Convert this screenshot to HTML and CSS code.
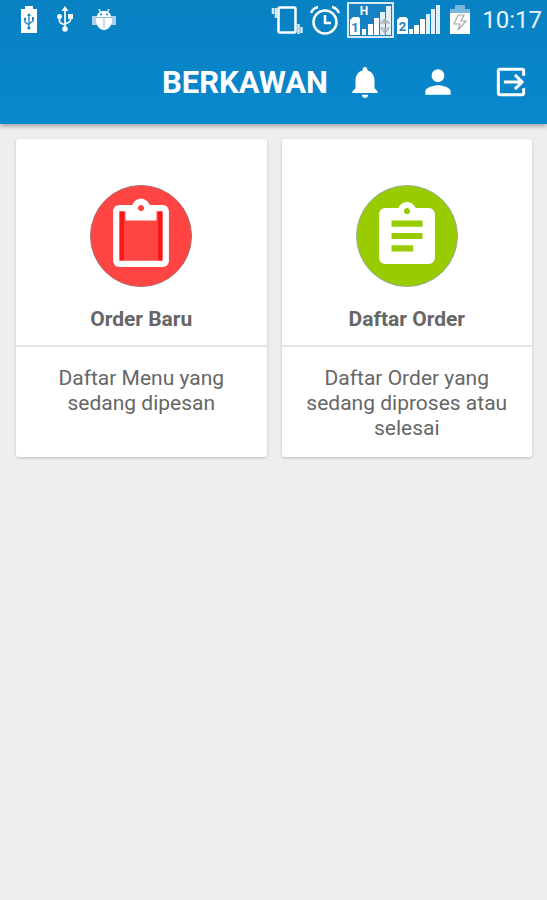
FILE: index.html
```html
<!DOCTYPE html>
<html lang="id">
<head>
<meta charset="utf-8">
<meta name="viewport" content="width=device-width, initial-scale=1">
<title>Berkawan</title>
<link rel="stylesheet" href="styles.css">
</head>
<body>
<header class="header">
  <div class="status">
    <div class="status-left">
      <svg width="18" height="28" viewBox="0 0 18 28" aria-hidden="true">
        <path fill="#fff" d="M5 1h8v3h4v24H1V4h4z"/>
        <g fill="none" stroke="#1685c2" stroke-width="1.3"><path d="M9 10v14M5 14v3l4 3M13 13v3l-4 3"/></g>
        <g fill="#1685c2"><path d="M9 8l2 3H7zM12 12h2v3h-2z"/><circle cx="5" cy="14" r="1.3"/><circle cx="9" cy="23" r="1.6"/></g>
      </svg>
      <svg width="18" height="28" viewBox="0 0 18 28" aria-hidden="true">
        <path fill="none" stroke="#f2f9fd" stroke-width="1.8" d="M9 4v20M3.500 12v4q0 2 5.500 4M14.500 12v3q0 2-5.500 4"/>
        <g fill="#f2f9fd"><path d="M9 1l3.500 5h-7zM12 9h5v5h-5z"/><circle cx="3.500" cy="11.500" r="2.500"/><circle cx="9" cy="24" r="2.800"/></g>
      </svg>
      <svg width="26" height="28" viewBox="0 0 26 28" aria-hidden="true">
        <path stroke="#fff" stroke-width="1.300" d="M7 4l2 4M17 4l-2 4"/>
        <path fill="#a8d2eb" d="M0 11h5v9H0zM19 11h5v9h-5z"/>
        <path fill="#fff" d="M5 12c0-4 3-6 7-6s7 2 7 6zM4 12h16v3c0 6-4 10-8 10s-8-4-8-10z"/>
        <path stroke="#8bc2e2" d="M12 12v11M4 12.500h16"/>
        <g fill="#1685c2"><circle cx="9" cy="9.500" r="1"/><circle cx="15" cy="9.500" r="1"/></g>
      </svg>
    </div>
    <div class="status-right">
      <svg width="32" height="36" viewBox="0 0 32 36" aria-hidden="true">
        <rect x="7.500" y="5.500" width="17" height="25" rx="1.500" fill="none" stroke="#fff" stroke-width="2.500"/>
        <path fill="none" stroke="#d3e9f6" stroke-width="2.500" d="M2 6v6M5 6v10M27.500 22v10M30.500 25v6"/>
      </svg>
      <svg class="alarm" width="30" height="36" viewBox="0 0 30 36" aria-hidden="true">
        <g fill="none" stroke="#fff" stroke-width="2.500"><circle cx="15" cy="20" r="11.500"/><path d="M15 13v8h6M1 11q2-5 7-6M29 11q-2-5-7-6"/></g>
      </svg>
      <svg class="sim-one" width="48" height="36" viewBox="0 0 48 36" aria-hidden="true">
        <rect x="1" y="1" width="45" height="34" fill="#1581c2" stroke="#d3e9f6" stroke-width="2"/>
        <path fill="#fff" d="M3 18l3-3h6l1 2v16H3zM15 27h4v6h-4zM21 22h5v11h-5zM27 16h5v17h-5z"/>
        <path fill="#e3eff6" d="M33 10h5v23h-5zM39 4h5v29h-5z"/>
        <path fill="none" stroke="#a3adb3" stroke-width="1.200" d="M34 21l4-4 4 4zM34 26l4 5 4-5zM38 17v4M38 26v5"/>
        <text class="sim-mark" x="17" y="13">H</text><text class="sim-number" x="8" y="30">1</text>
      </svg>
      <svg class="sim-two" width="43" height="36" viewBox="0 0 43 36" aria-hidden="true">
        <path fill="#fff" d="M0 18l3-3h6l2 2v15H0zM12 27h4v5h-4zM17 23h5v9h-5zM23 17h5v15h-5z"/>
        <path fill="#e1f0f9" d="M29 12h4v20h-4zM34 7h4v25h-4zM39 3h4v29h-4z"/>
        <text class="sim-number" x="5.500" y="29">2</text>
      </svg>
      <svg class="battery" width="20" height="36" viewBox="0 0 20 36" aria-hidden="true">
        <path fill="#76b7dd" d="M5 3h10v4h5v5H0V7h5z"/><path fill="#fff" d="M0 11h20v21H0z"/>
        <path fill="none" stroke="#aaa" stroke-width="1.200" d="M8 13h6l-3 6h5L8 28l2-6H4z"/>
      </svg>
      <time class="clock">10:17</time>
    </div>
  </div>
  <div class="appbar">
    <h1 class="brand">BERKAWAN</h1>
    <button class="action" type="button" aria-label="Notifikasi">
      <svg class="action-icon" viewBox="0 0 24 24"><path fill="#fff" d="M12 22c1.100 0 2-.9 2-2h-4c0 1.100.9 2 2 2zm6-6v-5c0-3.070-1.640-5.640-4.500-6.320V4c0-.83-.67-1.500-1.500-1.500s-1.500.67-1.500 1.500v.68C7.630 5.360 6 7.920 6 11v5l-2 2v1h16v-1z"/></svg>
    </button>
    <button class="action" type="button" aria-label="Profil">
      <svg class="action-icon" viewBox="0 0 24 24"><path fill="#fff" d="M12 12c2.210 0 4-1.790 4-4s-1.790-4-4-4-4 1.790-4 4 1.790 4 4 4zm0 2c-2.670 0-8 1.340-8 4v2h16v-2c0-2.660-5.330-4-8-4z"/></svg>
    </button>
    <button class="action" type="button" aria-label="Keluar">
      <svg class="action-icon" viewBox="0 0 24 24"><path fill="none" stroke="#fff" stroke-width="1.900" d="M20 8V5q0-1-1-1H5Q4 4 4 5v14q0 1 1 1h14q1 0 1-1v-3M7.500 12h11M14.500 7.500L19 12l-4.500 4.500"/></svg>
    </button>
  </div>
</header>
<main class="menu">
  <a class="card" href="#order-baru">
    <svg class="badge badge-red" viewBox="0 0 102 102" aria-hidden="true">
      <circle cx="51" cy="51" r="50.500"/>
      <g transform="translate(13.800 13.800) scale(3.100)"><path fill="#f81616" d="M5 4h1.500v16H5zM17.500 4H19v16h-1.500z"/><path fill="#fff" d="M19 2h-4.180C14.400.84 13.300 0 12 0S9.600.84 9.180 2H5c-1.100 0-2 .9-2 2v16c0 1.100.9 2 2 2h14c1.100 0 2-.9 2-2V4c0-1.100-.9-2-2-2zm-7 0c.55 0 1 .45 1 1s-.45 1-1 1-1-.45-1-1 .45-1 1-1zm7 18H5V4h2v3h10V4h2z"/></g>
    </svg>
    <h2 class="card-title">Order Baru</h2>
    <p class="card-text">Daftar Menu yang sedang dipesan</p>
  </a>
  <a class="card" href="#daftar-order">
    <svg class="badge badge-green" viewBox="0 0 102 102" aria-hidden="true">
      <circle cx="51" cy="51" r="50.500"/>
      <path fill="#fff" transform="translate(13.800 13.800) scale(3.100)" d="M19 3h-4.180C14.400 1.840 13.300 1 12 1s-2.400.84-2.820 2H5c-1.100 0-2 .9-2 2v14c0 1.100.9 2 2 2h14c1.100 0 2-.9 2-2V5c0-1.100-.9-2-2-2zm-7 0c.55 0 1 .45 1 1s-.45 1-1 1-1-.45-1-1 .45-1 1-1zm2 14H7v-2h7zm3-4H7v-2h10zm0-4H7V7h10z"/>
    </svg>
    <h2 class="card-title">Daftar Order</h2>
    <p class="card-text">Daftar Order yang sedang diproses atau selesai</p>
  </a>
</main>
</body>
</html>
```
FILE: styles.css
```css
* {
  box-sizing: border-box;
}

body {
  margin: 0;
  background: #eeeeee;
  color: #666666;
  font-family: Roboto, "Liberation Sans", sans-serif;
}

svg {
  display: block;
  flex: none;
}

.header {
  background: linear-gradient(#0881c2, #0888cc);
  box-shadow: 0 2px 5px rgba(0, 0, 0, 0.35);
}

.status {
  display: flex;
  justify-content: space-between;
  height: 40px;
  padding: 2px 5px 0 20px;
}

.status-left {
  display: flex;
  gap: 18px;
  padding-top: 3px;
}

.status-right {
  display: flex;
}

.alarm,
.sim-one {
  margin-left: 7px;
}

.sim-two {
  margin-left: 2px;
}

.battery {
  margin-left: 10px;
}

.sim-mark,
.sim-number {
  font-weight: 700;
  text-anchor: middle;
}

.sim-mark {
  fill: #ffffff;
  font-size: 12px;
}

.sim-number {
  fill: #2585bb;
  font-size: 13px;
}

.clock {
  margin-left: 12px;
  color: #e6f4fc;
  font-size: 24px;
  line-height: 36px;
}

.appbar {
  display: flex;
  align-items: center;
  justify-content: flex-end;
  height: 84px;
}

.brand {
  margin: 0;
  padding-top: 2px;
  color: #ffffff;
  font-size: 31px;
  line-height: 36px;
}

.action {
  display: flex;
  align-items: center;
  justify-content: center;
  width: 73px;
  height: 72px;
  padding: 0;
  border: 0;
  background: none;
}

.action-icon {
  width: 38px;
  height: 38px;
}

.menu {
  display: grid;
  grid-template-columns: 1fr 1fr;
  gap: 15px;
  padding: 15px 15px 15px 16px;
}

.card {
  display: flex;
  flex-direction: column;
  align-items: center;
  padding-top: 46px;
  border-radius: 3px;
  background: #ffffff;
  box-shadow: 0 1px 3px rgba(0, 0, 0, 0.2);
  color: inherit;
  text-align: center;
  text-decoration: none;
}

.badge {
  width: 102px;
  height: 102px;
  stroke-width: 1;
}

.badge-red {
  fill: #ff4444;
  stroke: #a86e6e;
}

.badge-green {
  fill: #99cc00;
  stroke: #9aaaa8;
}

.badge g,
.badge path {
  stroke: none;
}

.card-title {
  align-self: stretch;
  margin: 0;
  padding: 19px 0 13px;
  border-bottom: 2px solid #e4e4e4;
  font-size: 21px;
  line-height: 26px;
}

.card-text {
  margin: 0;
  padding: 19px 20px 16px;
  font-size: 21px;
  line-height: 25px;
}
```
